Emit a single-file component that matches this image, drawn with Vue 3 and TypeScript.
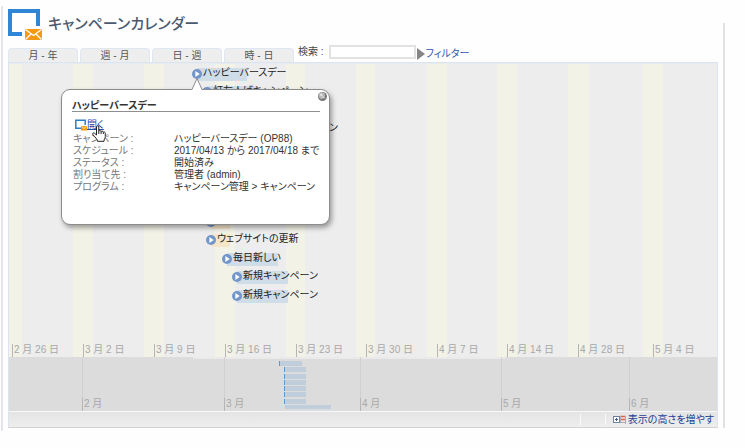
<script setup lang="ts">
import { ref } from 'vue'

interface Mark { label: string; at: number }
interface Campaign { name: string; at: number; span: number; tone: 'blue' | 'orange' }

/** Horizontal extent of the visible timeline, in timeline units. */
const SPAN = 708
const pct = (n: number): string => `${(n / SPAN) * 100}%`

const tabs: string[] = ['月 - 年', '週 - 月', '日 - 週', '時 - 日']
const search = ref('')

const weekends: [number, number][] = [
  [0, 13], [64, 20], [135, 20], [206, 20], [277, 19],
  [347, 19], [418, 20], [488, 20], [559, 21], [634, 20],
]

const weeks: Mark[] = [
  { label: '2 月 26 日', at: 3 },
  { label: '3 月 2 日', at: 74 },
  { label: '3 月 9 日', at: 145 },
  { label: '3 月 16 日', at: 216 },
  { label: '3 月 23 日', at: 287 },
  { label: '3 月 30 日', at: 357 },
  { label: '4 月 7 日', at: 428 },
  { label: '4 月 14 日', at: 498 },
  { label: '4 月 28 日', at: 569 },
  { label: '5 月 4 日', at: 644 },
]

const months: Mark[] = [
  { label: '2 月', at: 73 },
  { label: '3 月', at: 215 },
  { label: '4 月', at: 351 },
  { label: '5 月', at: 492 },
  { label: '6 月', at: 620 },
]

/** One entry per line of the timeline; null keeps a line empty. */
const campaigns: (Campaign | null)[] = [
  { name: 'ハッピーバースデー', at: 183, span: 50, tone: 'blue' },
  { name: '灯友人げキャンペーン', at: 193, span: 50, tone: 'blue' },
  null,
  { name: 'キャンペーン', at: 263, span: 20, tone: 'blue' },
  null,
  null,
  null,
  null,
  { name: '', at: 197, span: 19, tone: 'orange' },
  { name: 'ウェブサイトの更新', at: 197, span: 19, tone: 'orange' },
  { name: '毎日新しい', at: 213, span: 51, tone: 'blue' },
  { name: '新規キャンペーン', at: 223, span: 51, tone: 'blue' },
  { name: '新規キャンペーン', at: 223, span: 51, tone: 'blue' },
]

const overview: { at: number; span: number; tone: 'blue' | 'orange' }[] = [
  { at: 270, span: 23, tone: 'blue' },
  { at: 275, span: 22, tone: 'blue' },
  { at: 275, span: 22, tone: 'blue' },
  { at: 275, span: 22, tone: 'blue' },
  { at: 275, span: 22, tone: 'blue' },
  { at: 275, span: 22, tone: 'blue' },
  { at: 275, span: 22, tone: 'blue' },
  { at: 276, span: 46, tone: 'orange' },
]

const details: [string, string][] = [
  ['キャンペーン :', 'ハッピーバースデー (OP88)'],
  ['スケジュール :', '2017/04/13 から 2017/04/18 まで'],
  ['ステータス :', '開始済み'],
  ['割り当て先 :', '管理者 (admin)'],
  ['プログラム :', 'キャンペーン管理 > キャンペーン'],
]
</script>

<template>
  <main class="page">
    <header class="heading">
      <svg class="logo" viewBox="0 0 34 32" aria-hidden="true">
        <path d="M0 0H32V17H28V4H4V23H14V27H0Z" fill="#2f86d6" />
        <path d="M17 20H34V31H17Z" fill="#f39a10" />
        <path d="M17.500 20.500L25.500 26.500L33.500 20.500M17.500 30.500L23 25M33.500 30.500L28 25" fill="none" stroke="#fff" stroke-width="1.300" />
      </svg>
      <h1>キャンペーンカレンダー</h1>
    </header>

    <div class="toolbar">
      <nav class="tabs">
        <button v-for="t in tabs" :key="t" type="button" class="tab">{{ t }}</button>
      </nav>
      <label class="search-label" for="search">検索 :</label>
      <input id="search" v-model="search" class="search" type="text" />
      <a class="filter" href="#">
        <svg class="arrow" viewBox="0 0 8 12" aria-hidden="true"><path d="M0 0L8 6L0 12Z" fill="#858585" /></svg>フィルター
      </a>
    </div>

    <section class="calendar">
      <div class="timeline">
        <i v-for="w in weekends" :key="w[0]" class="weekend" :style="{ left: pct(w[0]), width: pct(w[1]) }"></i>
        <div class="rows">
          <div v-for="(c, i) in campaigns" :key="i" class="row" :style="{ paddingLeft: pct(c ? c.at : 0) }">
            <div v-if="c" class="campaign">
              <i class="bar" :class="c.tone" :style="{ width: c.span + 'px' }"></i>
              <svg class="play" viewBox="0 0 10 10" aria-hidden="true">
                <circle cx="5" cy="5" r="5" fill="#7396ca" />
                <path d="M3.400 2L7.700 5L3.400 8Z" fill="#fff" />
              </svg>
              <span v-if="c.name" class="name">{{ c.name }}</span>
            </div>
          </div>
        </div>
        <span v-for="m in weeks" :key="m.label" class="mark week" :style="{ left: pct(m.at) }">{{ m.label }}</span>
      </div>

      <div class="overview">
        <i class="window"></i>
        <i v-for="m in months" :key="m.at" class="gridline" :style="{ left: pct(m.at) }"></i>
        <div class="mini">
          <i v-for="(o, i) in overview" :key="i" class="mini-bar" :class="o.tone" :style="{ marginLeft: pct(o.at), width: pct(o.span) }"></i>
        </div>
        <span v-for="m in months" :key="m.label" class="mark month" :style="{ left: pct(m.at) }">{{ m.label }}</span>
      </div>

      <footer class="footer">
        <i class="sep"></i>
        <i class="sep"></i>
        <a class="grow" href="#">
          <svg class="grow-icon" viewBox="0 0 13 9" aria-hidden="true">
            <rect x=".5" y="1.500" width="6" height="6" fill="#fff" stroke="#71839f" />
            <path d="M2 4.500H5M3.500 3V6" stroke="#4b5c7a" />
            <path d="M7 1.500H12.500M7 4.500H12.500" stroke="#df6547" stroke-width="1.500" />
            <path d="M7.500 1V8M12.500 1V9M7 7.500H12" stroke="#a9adb8" fill="none" />
          </svg>表示の高さを増やす
        </a>
      </footer>
    </section>

    <aside class="popup">
      <svg class="pointer" viewBox="0 0 12 13" aria-hidden="true">
        <path d="M0 13L1 11.500L6 .5L11 11.500L12 13Z" fill="#fff" />
        <path d="M0 11.500H1L6 .5L11 11.500H12" fill="none" stroke="#8c8c8c" />
      </svg>
      <button class="close" type="button" aria-label="閉じる">
        <svg viewBox="0 0 9 9" aria-hidden="true">
          <circle cx="4.500" cy="4.500" r="4.500" fill="#777" />
          <circle cx="3.800" cy="3.500" r="3.200" fill="#b5b5b5" />
          <circle cx="3.300" cy="2.800" r="1.500" fill="#dedede" />
          <path d="M3 6.500L5 4.500L7 6.500" stroke="#ddd" fill="none" />
        </svg>
      </button>
      <h2>ハッピーバースデー</h2>
      <a class="open" href="#">
        <svg class="open-icon" viewBox="0 0 12 12" aria-hidden="true">
          <path d="M6 9.200H.8V1.200H10.200V6" fill="none" stroke="#2a7fc9" stroke-width="1.500" />
          <path d="M6 7H12V11.500H6Z" fill="#f39a10" />
          <path d="M6.500 7.500L9 9.500L11.500 7.500" stroke="#ffdf9e" fill="none" />
        </svg><span>開く</span>
      </a>
      <dl class="details">
        <template v-for="d in details" :key="d[0]">
          <dt>{{ d[0] }}</dt>
          <dd>{{ d[1] }}</dd>
        </template>
      </dl>
      <svg class="hand" viewBox="0 0 14 17" aria-hidden="true">
        <path d="M4.500 10V2C4.500 .2 6.800 .2 6.800 2V6C7.200 5.200 9 5.400 9.100 6.600C9.600 5.800 11.200 6.100 11.300 7.200C12 6.600 13.300 7 13.300 8.300V11.500C13.300 13.200 12 14 12 16.300H5.500C5.300 14 3.300 12.500 .9 9.600C0 8.300 1.500 7.300 2.700 8.300Z" fill="#fff" stroke="#222" />
        <path d="M6.800 6V9M9.100 6.600V9M11.300 7.200V9" stroke="#222" />
      </svg>
    </aside>
  </main>
</template>

<style>
body {
  margin: 0;
  background: #fefefe;
}
</style>

<style scoped>
.page {
  position: relative;
  box-sizing: border-box;
  margin: 6px 20px 0 1px;
  padding: 3px 7px 3px 5px;
  border-left: 2px solid #e4e5e8;
  font: 10px/12px "Liberation Sans", "Noto Sans CJK JP", sans-serif;
  font-feature-settings: "palt";
  color: #333;
}
.page::after {
  content: "";
  position: absolute;
  top: 17px;
  right: 0;
  bottom: 3px;
  border-right: 2px solid #e2e2e2;
}
.heading {
  display: flex;
  gap: 6px;
  height: 39px;
}
.logo {
  width: 34px;
  height: 32px;
}
h1 {
  margin: 3px 0 0;
  font-size: 15px;
  line-height: 24px;
  font-weight: 500;
  color: #4b5a6e;
}
.toolbar {
  display: flex;
  height: 14px;
}
.tabs {
  display: flex;
  gap: 2px;
}
.tab {
  box-sizing: border-box;
  width: 70px;
  height: 14px;
  padding: 0;
  border: 1px solid #dfe7f3;
  border-bottom: 0;
  border-radius: 4px 4px 0 0;
  background: #eee;
  font: inherit;
  font-feature-settings: inherit;
  color: #555;
}
.search-label {
  margin: -2px 5px 0 4px;
  color: #444;
}
.search {
  box-sizing: border-box;
  width: 87px;
  height: 14px;
  margin-top: -3px;
  padding: 0 2px;
  border: 2px solid #e2e2e2;
  outline: 0;
  background: #fff;
  font: inherit;
}
.filter {
  display: flex;
  align-items: center;
  height: 12px;
  gap: 1px;
  margin-left: 1px;
  color: #2d55b0;
  text-decoration: none;
}
.arrow {
  width: 8px;
  height: 12px;
}
.calendar {
  border: 1px solid #dce5ef;
  border-bottom-color: #d3d3d3;
}
.timeline {
  position: relative;
  box-sizing: border-box;
  height: 294px;
  overflow: hidden;
  border-top: 1px solid #e8ecf0;
  background: #ededed;
}
.weekend {
  position: absolute;
  top: 0;
  bottom: 0;
  background: #f2f2e7;
}
.rows {
  position: relative;
  display: grid;
  grid-template-rows: repeat(13, 1fr);
  height: 240px;
}
.row {
  min-height: 0;
}
.campaign {
  position: relative;
  display: flex;
  align-items: center;
  height: 18px;
  gap: 1px;
}
.play {
  position: relative;
  width: 10px;
  height: 10px;
  margin-top: 2px;
}
.name {
  position: relative;
  color: #222;
  white-space: nowrap;
}
.bar {
  position: absolute;
  top: 4px;
  left: 5px;
  height: 13px;
}
.bar.blue {
  background: #cfdde8;
}
.bar.orange {
  background: #f5e6cb;
}
.mark {
  position: absolute;
  bottom: 0;
  box-sizing: border-box;
  height: 13px;
  padding-left: 1px;
  border-left: 1px solid #b5b5b5;
  line-height: 12px;
  color: #a8a8a8;
  white-space: nowrap;
}
.overview {
  position: relative;
  height: 54px;
  background: #dcdcdc;
  border-bottom: 1px solid #f5f8fc;
}
.window {
  position: absolute;
  top: 0;
  left: 26%;
  width: 44%;
  height: 2px;
  background: #eaeaea;
}
.gridline {
  position: absolute;
  top: 0;
  bottom: 0;
  border-left: 1px solid #d0d0d0;
}
.mini {
  position: relative;
  display: grid;
  grid-template-rows: repeat(8, 1fr);
  box-sizing: border-box;
  height: 54px;
  padding-top: 4px;
}
.mini-bar {
  box-sizing: border-box;
  height: 5px;
  border-left: 1px solid #5b9bd0;
  background: #c0cedb;
}
.mini-bar.orange {
  height: 4px;
  border-left-color: #d8c79e;
}
.footer {
  display: flex;
  align-items: center;
  justify-content: flex-end;
  height: 15px;
  padding-right: 3px;
  background: linear-gradient(#e4e4e4, #eee);
}
.sep {
  height: 11px;
  margin-right: 24px;
  border-left: 1px solid #fafafa;
}
.sep + .sep {
  margin-right: 7px;
}
.grow {
  display: flex;
  align-items: center;
  gap: 2px;
  color: #1c3f94;
  text-decoration: none;
}
.grow-icon {
  width: 13px;
  height: 9px;
}
.popup {
  position: absolute;
  top: 83px;
  left: 58px;
  box-sizing: border-box;
  width: 269px;
  height: 136px;
  padding: 10px 9px 0 10px;
  border: 1px solid #8c8c8c;
  border-radius: 9px;
  background: #fff;
  box-shadow: 2px 3px 5px rgba(0, 0, 0, .35);
}
.pointer {
  position: absolute;
  top: -12px;
  left: 129px;
  width: 12px;
  height: 13px;
}
.close {
  position: absolute;
  top: 2px;
  right: 2px;
  display: flex;
  padding: 0;
  border: 0;
  background: none;
}
.close svg {
  width: 9px;
  height: 9px;
}
h2 {
  margin: 0 0 7px;
  border-bottom: 1px solid #8f8f8f;
  font-size: 10px;
  line-height: 11px;
  font-weight: 700;
  color: #333;
}
.open {
  display: flex;
  align-items: center;
  width: max-content;
  height: 12px;
  margin-left: 3px;
  color: #2450b0;
}
.open-icon {
  width: 12px;
  height: 12px;
}
.details {
  display: grid;
  grid-template-columns: 101px 1fr;
  margin: 2px 0 0 1px;
}
dt {
  color: #777;
}
dd {
  margin: 0;
  white-space: nowrap;
}
.hand {
  position: absolute;
  top: 35px;
  left: 30px;
  width: 14px;
  height: 17px;
}
</style>
